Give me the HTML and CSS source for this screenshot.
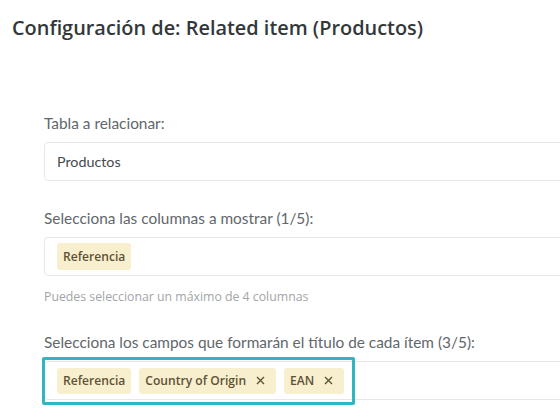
FILE: index.html
```html
<!DOCTYPE html>
<html lang="es">
<head>
<meta charset="utf-8">
<link rel="stylesheet" href="styles.css">
</head>
<body>
<div class="page">
  <h1 class="title">Configuración de: Related item (Productos)</h1>
  <div class="form">
    <div class="field">
      <label class="label">Tabla a relacionar:</label>
      <div class="input"><span class="value">Productos</span></div>
    </div>
    <div class="field">
      <label class="label">Selecciona las columnas a mostrar (1/5):</label>
      <div class="input tags"><span class="chip chip-tall">Referencia</span></div>
      <p class="help">Puedes seleccionar un máximo de 4 columnas</p>
    </div>
    <div class="field">
      <label class="label">Selecciona los campos que formarán el título de cada ítem (3/5):</label>
      <div class="input tags">
        <span class="chip">Referencia</span>
        <span class="chip">Country of Origin <svg class="x" viewBox="0 0 9 9" width="9" height="9"><path d="M1 1L8 8M8 1L1 8" /></svg></span>
        <span class="chip">EAN <svg class="x" viewBox="0 0 9 9" width="9" height="9"><path d="M1 1L8 8M8 1L1 8" /></svg></span>
        <span class="focus-ring"></span>
      </div>
    </div>
  </div>
</div>
</body>
</html>
```

FILE: styles.css
```css
html, body {
  margin: 0;
  padding: 0;
  background: #ffffff;
  overflow: hidden;
}
.page {
  width: 560px;
  height: 420px;
  overflow: hidden;
}
.title {
  margin: 0;
  padding: 15px 0 0 12px;
  font-family: "Open Sans", sans-serif;
  font-weight: 600;
  font-size: 19.9px;
  line-height: 26px;
  color: #33373a;
  white-space: nowrap;
}
.form {
  padding: 73px 0 0 44px;
}
.field {
  margin-bottom: 28px;
}
.field:nth-child(2) {
  margin-bottom: 29px;
}
.label {
  display: block;
  font-family: Lato, sans-serif;
  font-size: 15.4px;
  line-height: 18px;
  color: #62676b;
  margin-bottom: 10px;
  white-space: nowrap;
}
.input {
  position: relative;
  box-sizing: border-box;
  width: 560px;
  height: 39px;
  border: 1px solid #e6e7e8;
  border-radius: 4px;
  display: flex;
  align-items: center;
  padding: 0 12px;
  gap: 8px;
}
.value {
  font-family: Lato, sans-serif;
  font-size: 14.3px;
  color: #454a4e;
}
.chip {
  display: inline-flex;
  align-items: center;
  height: 26px;
  padding: 0 6px;
  background: #f8efcf;
  border-radius: 3px;
  font-family: "Open Sans", sans-serif;
  font-weight: 600;
  font-size: 12.1px;
  color: #5e5234;
  white-space: nowrap;
}
.chip-tall {
  height: 27px;
}
.x {
  margin-left: 10px;
  margin-right: 5px;
  stroke: #5e5234;
  stroke-width: 1.4;
  fill: none;
}
.help {
  margin: 13px 0 0 0;
  font-family: "Open Sans", sans-serif;
  font-size: 12.3px;
  line-height: 15px;
  color: #a2a5a8;
  white-space: nowrap;
}
.focus-ring {
  position: absolute;
  left: -3px;
  top: -5px;
  width: 313px;
  height: 48px;
  box-sizing: border-box;
  border: 3px solid #2fb6c1;
  border-radius: 2px;
}
```
